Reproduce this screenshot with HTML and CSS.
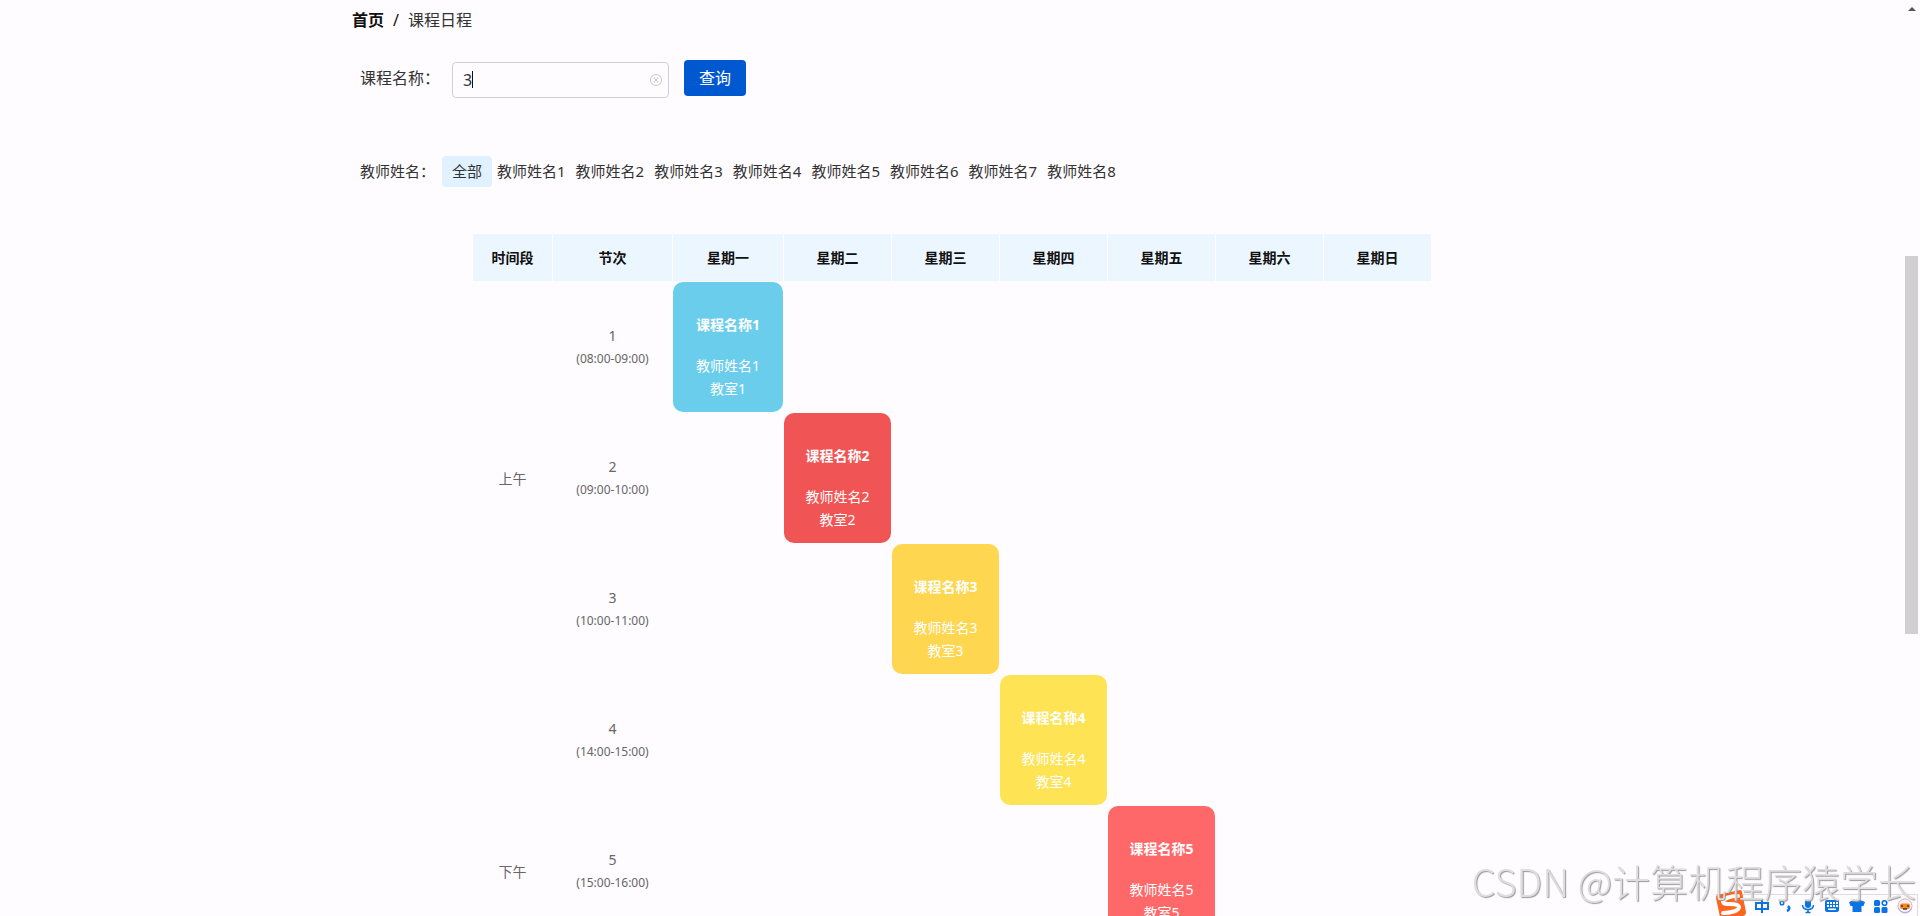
FILE: index.html
```html
<!DOCTYPE html>
<html lang="zh-CN">
<head>
    <meta charset="UTF-8">
    <meta name="viewport" content="width=device-width, initial-scale=1.0">
    <title>课程日程</title>
    <link rel="stylesheet" href="styles.css">
</head>
<body>
    <main class="container">
        <nav class="breadcrumb">
            <a class="home" href="#">首页</a>
            <span class="separator">/</span>
            <span class="current">课程日程</span>
        </nav>

        <form class="search">
            <label for="name">课程名称：</label>
            <div class="search-box">
                <input id="name" type="text" value="3">
                <span class="caret"></span>
                <button class="clear" type="button" aria-label="清空">
                    <svg width="14" height="14" viewBox="0 0 14 14" fill="none" stroke="#c8cad2">
                        <circle cx="7" cy="7" r="5.5"/>
                        <path d="M5 5l4 4M9 5l-4 4"/>
                    </svg>
                </button>
            </div>
            <button class="query" type="submit">查询</button>
        </form>

        <div class="filter">
            <span class="filter-label">教师姓名：</span>
            <a class="active" href="#">全部</a>
            <a href="#">教师姓名1</a>
            <a href="#">教师姓名2</a>
            <a href="#">教师姓名3</a>
            <a href="#">教师姓名4</a>
            <a href="#">教师姓名5</a>
            <a href="#">教师姓名6</a>
            <a href="#">教师姓名7</a>
            <a href="#">教师姓名8</a>
        </div>

        <table class="schedule">
            <colgroup>
                <col class="col-period">
                <col class="col-section">
                <col class="col-monday">
                <col span="6">
            </colgroup>
            <thead>
                <tr>
                    <th>时间段</th>
                    <th>节次</th>
                    <th>星期一</th>
                    <th>星期二</th>
                    <th>星期三</th>
                    <th>星期四</th>
                    <th>星期五</th>
                    <th>星期六</th>
                    <th>星期日</th>
                </tr>
            </thead>
            <tbody>
                <tr>
                    <td rowspan="3">上午</td>
                    <td>1<p class="time">(08:00-09:00)</p></td>
                    <td class="course blue"><h4>课程名称1</h4><p>教师姓名1</p><p>教室1</p></td>
                    <td></td><td></td><td></td><td></td><td></td><td></td>
                </tr>
                <tr>
                    <td>2<p class="time">(09:00-10:00)</p></td>
                    <td></td>
                    <td class="course red"><h4>课程名称2</h4><p>教师姓名2</p><p>教室2</p></td>
                    <td></td><td></td><td></td><td></td><td></td>
                </tr>
                <tr>
                    <td>3<p class="time">(10:00-11:00)</p></td>
                    <td></td><td></td>
                    <td class="course orange"><h4>课程名称3</h4><p>教师姓名3</p><p>教室3</p></td>
                    <td></td><td></td><td></td><td></td>
                </tr>
                <tr>
                    <td rowspan="3">下午</td>
                    <td>4<p class="time">(14:00-15:00)</p></td>
                    <td></td><td></td><td></td>
                    <td class="course yellow"><h4>课程名称4</h4><p>教师姓名4</p><p>教室4</p></td>
                    <td></td><td></td><td></td>
                </tr>
                <tr>
                    <td>5<p class="time">(15:00-16:00)</p></td>
                    <td></td><td></td><td></td><td></td>
                    <td class="course coral"><h4>课程名称5</h4><p>教师姓名5</p><p>教室5</p></td>
                    <td></td><td></td>
                </tr>
                <tr>
                    <td></td>
                    <td></td><td></td><td></td><td></td><td></td><td></td><td></td>
                </tr>
            </tbody>
        </table>
    </main>

    <div class="scrollbar">
        <span class="arrow"></span>
        <span class="thumb"></span>
    </div>

    <div class="ime">
        <svg class="logo" width="32" height="28" viewBox="0 0 32 28">
            <path d="M2 5L25 0Q27 0 27 2L31 22Q31 25 28 26L8 30Q5 30 5 27L1 8Q1 6 2 5Z" fill="#ff6420"/>
            <path d="M23 6C16 6 8 8 8 12C9 16 23 12 24 17C24 21 15 23 8 23" fill="none" stroke="#fff" stroke-width="4" stroke-linecap="round"/>
        </svg>
        <svg width="14" height="16" viewBox="0 0 14 16" fill="none" stroke="#0a74e6" stroke-width="2">
            <path d="M1 5H13V11H1ZM7 1V15"/>
        </svg>
        <svg width="14" height="16" viewBox="0 0 14 16" fill="none" stroke="#0a74e6" stroke-width="1.5">
            <circle cx="4" cy="5" r="1.8"/>
            <path d="M10 8Q13 11 9 13" stroke-width="2.6"/>
        </svg>
        <svg width="14" height="16" viewBox="0 0 14 16" fill="none" stroke="#0a74e6" stroke-width="1.6">
            <rect x="4" y="1" width="6" height="9" rx="3" fill="#0a74e6" stroke="none"/>
            <path d="M1.5 7C2 13 12 13 12.5 7M7 11V14M4.5 14.5H9.5"/>
        </svg>
        <svg width="16" height="16" viewBox="0 0 16 16">
            <rect x="1" y="2" width="14" height="12" rx="2" fill="#0a74e6"/>
            <path d="M3 4h2v2H3zM6 4h2v2H6zM9 4h2v2H9zM12 4h2v2h-2zM3 7h2v2H3zM6 7h2v2H6zM9 7h2v2H9zM12 7h2v2h-2zM4 10.500h8v1.500H4z" fill="#fff"/>
        </svg>
        <svg width="16" height="16" viewBox="0 0 16 16">
            <path d="M5 2Q8 5 11 2L16 4L14.5 8H12.5V14H3.5V8H1.5L0 4Z" fill="#0a74e6"/>
        </svg>
        <svg width="14" height="16" viewBox="0 0 14 16" fill="#0a74e6">
            <rect x="0" y="2" width="6" height="6" rx="1.5"/>
            <circle cx="10.5" cy="5" r="2.3" fill="none" stroke="#0a74e6" stroke-width="1.6"/>
            <rect x="0" y="9" width="6" height="6" rx="1.5"/>
            <rect x="7.5" y="9" width="6" height="6" rx="1.5"/>
        </svg>
        <svg width="16" height="16" viewBox="0 0 16 16">
            <circle cx="8" cy="8" r="7" fill="#fff5f8" stroke="#e9a5bd"/>
            <path d="M1.5 10A7 7 0 0 0 14.5 10" fill="none" stroke="#8fb2f5"/>
            <rect x="3" y="5.5" width="10" height="5.5" rx="2" fill="#f08a24"/>
            <path d="M5 7V9M11 7V9M6 11H10" stroke="#54331f" stroke-width="1.5"/>
        </svg>
    </div>
    <div class="watermark">CSDN @计算机程序猿学长</div>
</body>
</html>
```

FILE: styles.css
```css
*{
    box-sizing:border-box;
}

body{
    margin:0;
    height:100vh;
    padding-right:16px;
    overflow:hidden;
    background-color:#fefcff;
    color:#333;
    font-family:"Noto Sans","Noto Sans CJK SC",sans-serif;
    font-size:16px;
}

a{
    color:inherit;
    text-decoration:none;
}

p{
    margin:0;
}

.container{
    max-width:1200px;
    margin:0 auto;
}

.breadcrumb{
    display:flex;
    gap:9px;
    height:40px;
    line-height:40px;
}

.breadcrumb .home,.breadcrumb .separator{
    color:#111;
}

.breadcrumb .home{
    font-weight:bold;
}

.search{
    display:flex;
    align-items:flex-start;
    padding:20px 8px 0;
}

.search label{
    width:92px;
    line-height:36px;
}

.search-box{
    position:relative;
    width:217px;
    margin-top:2px;
}

.search-box input{
    width:100%;
    height:36px;
    padding:0 30px 0 10px;
    border:1px solid #cbd0e2;
    border-radius:4px;
    outline:none;
    background-color:transparent;
    color:#333;
    font:inherit;
}

.caret{
    position:absolute;
    left:20px;
    top:9px;
    width:1px;
    height:17px;
    background-color:#111;
}

.clear{
    position:absolute;
    right:6px;
    top:11px;
    width:14px;
    height:14px;
    padding:0;
    border:none;
    background:none;
}

.clear svg{
    display:block;
}

.query{
    width:62px;
    height:36px;
    margin-left:15px;
    padding:0 0 2px;
    border:none;
    border-radius:4px;
    background-color:#0058d0;
    color:#fff;
    font:inherit;
}

.filter{
    display:flex;
    margin-top:58px;
    padding-left:8px;
    font-size:15px;
    line-height:31px;
}

.filter-label{
    width:82px;
}

.filter a{
    padding:0 5px;
}

.filter .active{
    padding:0 10px;
    border-radius:4px;
    background-color:#e0f1ff;
}

.schedule{
    width:80%;
    margin:46px auto 0;
    table-layout:fixed;
    border-spacing:1px;
    font-size:14px;
    line-height:23px;
    text-align:center;
}

.col-period{
    width:79px;
}

.col-section{
    width:119px;
}

.col-monday{
    width:110px;
}

.schedule th{
    height:47px;
    padding:0;
    background-color:#ecf6ff;
    color:#111;
}

.schedule td{
    height:130px;
    padding:0;
    color:#666;
}

.schedule .time{
    font-size:12px;
}

.schedule .course{
    border-radius:10px;
    color:#fff;
}

.course h4{
    margin:18px 0;
}

.blue{
    background-color:#6bcdec;
}

.red{
    background-color:#f15454;
}

.orange{
    background-color:#fed64f;
}

.yellow{
    background-color:#fee354;
}

.coral{
    background-color:#ff6869;
}

/* page scrollbar */
.scrollbar{
    position:fixed;
    top:0;
    right:2px;
    bottom:0;
    width:13px;
}

.arrow{
    display:block;
    width:8px;
    margin:7px auto 0;
    border:4px solid transparent;
    border-top:none;
    border-bottom-color:#555;
}

.thumb{
    position:absolute;
    top:28%;
    width:100%;
    height:378px;
    background-color:#d1cfd2;
}

/* input method bar */
.ime{
    position:fixed;
    right:2px;
    bottom:0;
    display:flex;
    align-items:center;
    gap:9px;
    height:22px;
    padding-right:4px;
    border-top:1px solid #dcdce8;
    border-right:1px solid #dcdce8;
}

.ime .logo{
    margin-top:-4px;
    margin-right:-1px;
}

.watermark{
    position:fixed;
    right:4px;
    bottom:9px;
    color:#dedede;
    font-family:"Noto Sans CJK SC",sans-serif;
    font-size:38px;
    font-weight:300;
    line-height:52px;
    text-shadow:1px 1px 1px #999;
}
```
